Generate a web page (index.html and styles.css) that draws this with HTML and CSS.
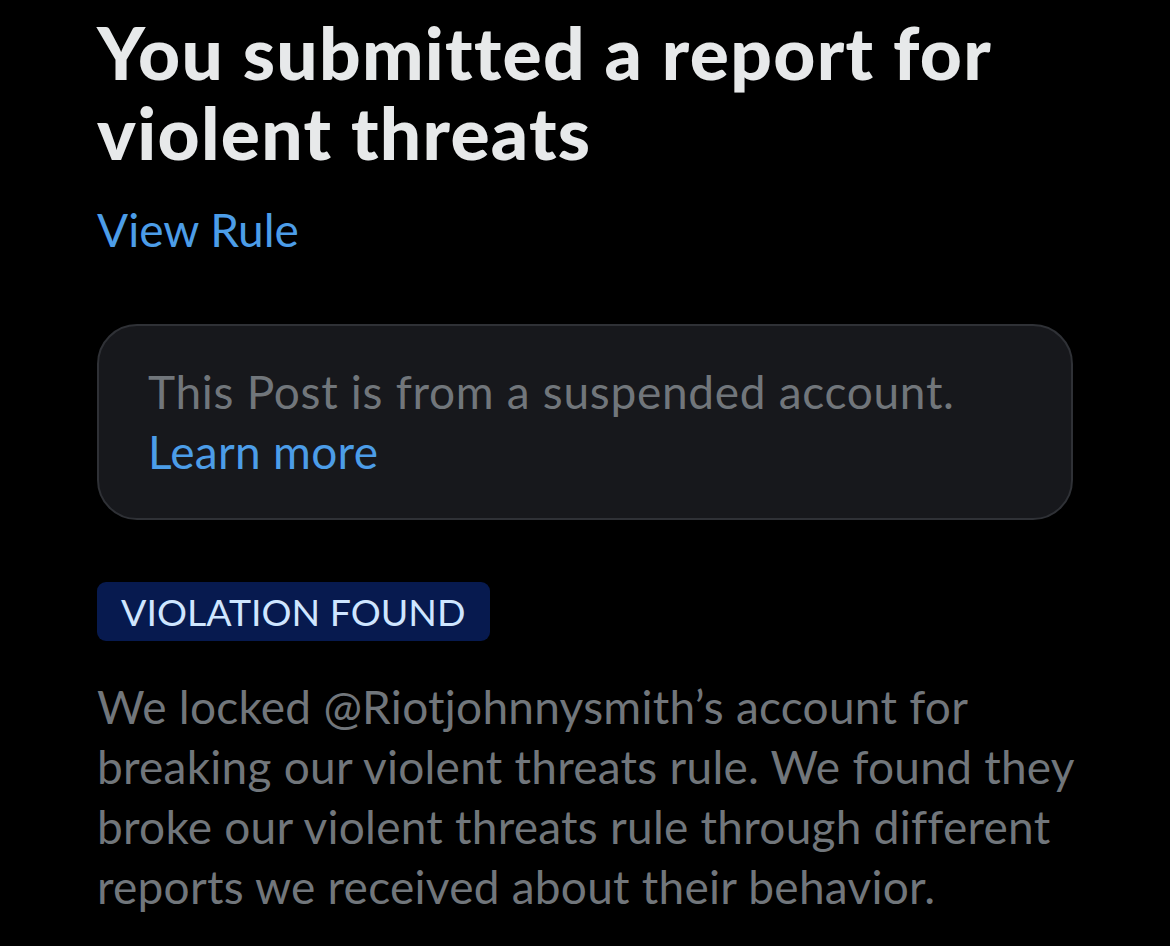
FILE: index.html
```html
<!DOCTYPE html>
<html>
<head>
<meta charset="utf-8">
<link rel="stylesheet" href="styles.css">
</head>
<body>
<main class="page">
  <h1 class="title">You submitted a report for violent threats</h1>
  <a class="rule-link">View Rule</a>
  <div class="card">
    <p class="card-text">This Post is from a suspended account.</p>
    <a class="card-link">Learn more</a>
  </div>
  <span class="badge">VIOLATION FOUND</span>
  <p class="body-text">We locked @Riotjohnnysmith’s account for breaking our violent threats rule. We found they broke our violent threats rule through different reports we received about their behavior.</p>
</main>
</body>
</html>
```
FILE: styles.css
```css
* { box-sizing: border-box; }
html, body { margin: 0; padding: 0; background: #000; }
body { font-family: "Lato", "Noto Sans", sans-serif; }
.page {
  width: 1170px;
  height: 946px;
  overflow: hidden;
  padding: 12px 97px 0 97px;
  display: flex;
  flex-direction: column;
  align-items: flex-start;
}
.title {
  margin: 0;
  font-size: 73px;
  font-weight: 900;
  line-height: 80px;
  color: #e7e9ea;
  letter-spacing: 1.3px;
  width: 1000px;
}
.rule-link {
  margin-top: 30px;
  font-size: 46px;
  line-height: 56px;
  color: #4c9de8;
}
.card {
  margin-top: 66px;
  width: 976px;
  height: 196px;
  border: 2px solid #2f3136;
  border-radius: 40px;
  background: #17181c;
  padding: 36px 49px;
}
.card-text {
  margin: 0;
  font-size: 46px;
  line-height: 60px;
  color: #71767b;
  letter-spacing: 0.7px;
}
.card-link {
  display: block;
  font-size: 46px;
  line-height: 60px;
  color: #4c9de8;
  letter-spacing: 0.3px;
}
.badge {
  margin-top: 62px;
  background: #071a4f;
  color: #cfe6ff;
  border-radius: 9px;
  font-size: 37.5px;
  line-height: 59px;
  padding: 0 24px 0 24px;
}
.body-text {
  margin: 36px 0 0 0;
  font-size: 46px;
  line-height: 60px;
  color: #71767b;
  letter-spacing: 0.25px;
  width: 990px;
}
```
